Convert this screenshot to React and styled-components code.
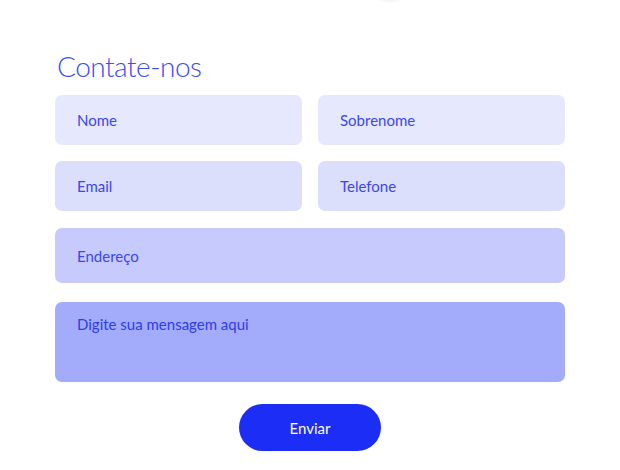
import React from "react";
import styled, { createGlobalStyle } from "styled-components";

const Global = createGlobalStyle`
  html, body { margin: 0; padding: 0; background: #ffffff; }
  body { font-family: "Lato", "Liberation Sans", sans-serif; overflow: hidden; }
  * { box-sizing: border-box; }
`;

const Page = styled.div`
  position: relative;
  width: 620px;
  height: 470px;
  overflow: hidden;
`;

const TopShadow = styled.div`
  position: absolute;
  top: -30px;
  left: 370px;
  width: 40px;
  height: 30px;
  border-radius: 50%;
  box-shadow: 0 0 4px rgba(0, 0, 0, 0.12);
`;

const Section = styled.section`
  width: 510px;
  margin: 0 auto;
  padding-top: 48px;
  display: flex;
  flex-direction: column;
`;

const Title = styled.h2`
  margin: 0 0 0 2px;
  font-family: "Lato", "Liberation Sans", sans-serif;
  font-weight: 300;
  font-size: 28px;
  line-height: 36px;
  color: #3a4bf8;
  letter-spacing: -0.5px;
`;

const Form = styled.form`
  margin-top: 11px;
  display: flex;
  flex-direction: column;
`;

const Row = styled.div`
  display: grid;
  grid-template-columns: 1fr 1fr;
  column-gap: 16px;
  margin-bottom: ${(p) => p.$gap}px;
`;

const Field = styled.input`
  display: block;
  width: 100%;
  height: ${(p) => p.$h}px;
  border: none;
  outline: none;
  border-radius: 7px;
  background: ${(p) => p.$bg};
  padding: 0 22px;
  font-family: "Lato", "Liberation Sans", sans-serif;
  font-size: 15px;
  color: #3a47ee;
  margin-bottom: ${(p) => p.$mb || 0}px;
  &::placeholder { color: #3a47ee; opacity: 1; }
`;

const Message = styled.textarea`
  display: block;
  width: 100%;
  height: 80px;
  border: none;
  outline: none;
  resize: none;
  border-radius: 7px;
  background: #a3abfb;
  padding: 12px 22px;
  font-family: "Lato", "Liberation Sans", sans-serif;
  font-size: 15px;
  line-height: 20px;
  color: #2f3ce8;
  &::placeholder { color: #2f3ce8; opacity: 1; }
`;

const Actions = styled.div`
  display: flex;
  justify-content: center;
  margin-top: 22px;
`;

const Button = styled.button`
  width: 142px;
  height: 47px;
  border: none;
  border-radius: 24px;
  background: #1c2ef5;
  color: #ffffff;
  font-family: "Lato", "Liberation Sans", sans-serif;
  font-size: 15px;
  font-weight: 400;
  cursor: pointer;
`;

export default function App() {
  return (
    <Page>
      <Global />
      <TopShadow />
      <Section>
        <Title>Contate-nos</Title>
        <Form onSubmit={(e) => e.preventDefault()}>
          <Row $gap={16}>
            <Field $h={50} $bg="#e6e8fd" placeholder="Nome" />
            <Field $h={50} $bg="#e6e8fd" placeholder="Sobrenome" />
          </Row>
          <Row $gap={17}>
            <Field $h={50} $bg="#dcdffc" placeholder="Email" />
            <Field $h={50} $bg="#dcdffc" placeholder="Telefone" />
          </Row>
          <Field $h={55} $mb={19} $bg="#c7cafc" placeholder="Endereço" />
          <Message placeholder="Digite sua mensagem aqui" />
          <Actions>
            <Button type="submit">Enviar</Button>
          </Actions>
        </Form>
      </Section>
    </Page>
  );
}
